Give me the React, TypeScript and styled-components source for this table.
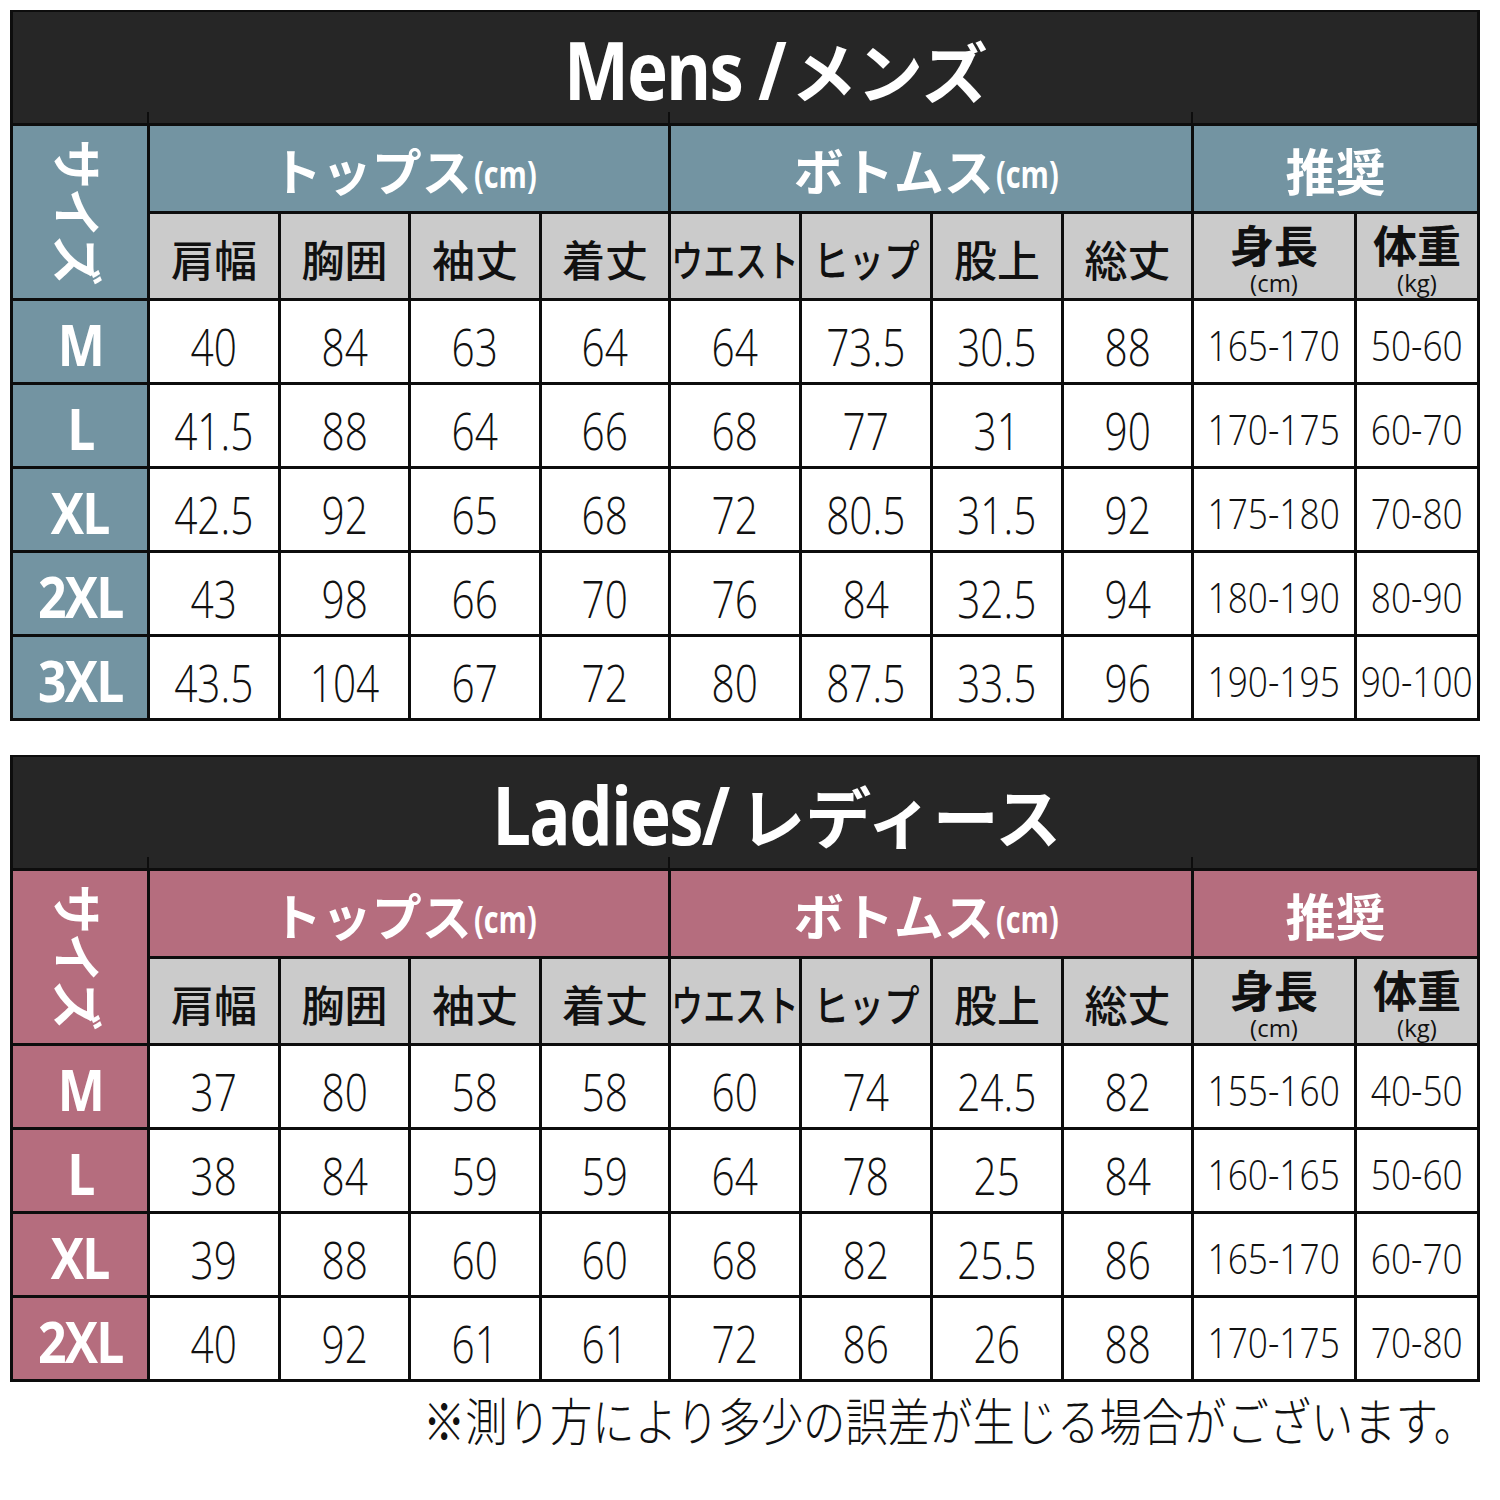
import React from "react";
import styled, { createGlobalStyle } from "styled-components";

const GlobalStyle = createGlobalStyle`
  html, body {
    margin: 0;
    padding: 0;
    background: #ffffff;
  }
  body {
    font-family: "Noto Sans CJK JP", "Open Sans", sans-serif;
    color: #111111;
  }
`;

const LATIN = `"Open Sans", "Noto Sans CJK JP", sans-serif`;
const CJK = `"Noto Sans CJK JP", "Open Sans", sans-serif`;

const Page = styled.div`
  width: 1490px;
  padding: 10px 0 0 10px;
  display: flex;
  flex-direction: column;
`;

const Table = styled.section<{ $rows: number }>`
  width: 1464px;
  display: grid;
  grid-template-columns: 134px 128px 127px 128px 126px 128px 128px 128px 127px 160px 120px;
  grid-template-rows: 111px 85px 84px repeat(${(p) => p.$rows}, 81px);
  gap: 3px;
  background: #0d0d0d;
  border: 3px solid #0d0d0d;
  border-top-width: 2px;
  & + & {
    margin-top: 34px;
  }
`;

const TitleBar = styled.header`
  grid-column: 1 / -1;
  background: #262626;
  color: #ffffff;
  display: flex;
  align-items: center;
  justify-content: center;
  padding-left: 58px;
  padding-top: 2px;
  white-space: nowrap;
`;

const TitleLatin = styled.span`
  display: inline-block;
  font-family: ${LATIN};
  font-weight: 700;
  font-size: 80px;
  letter-spacing: -2px;
  transform: scaleX(0.86);
  margin: 0 -14px;
`;

const TitleKana = styled.span<{ $gap: number }>`
  font-family: ${CJK};
  font-weight: 700;
  font-size: 66px;
  margin-left: ${(p) => p.$gap}px;
`;

const SizeHead = styled.div<{ $bg: string }>`
  grid-row: 2 / span 2;
  grid-column: 1;
  background: ${(p) => p.$bg};
  color: #ffffff;
  display: flex;
  align-items: center;
  justify-content: center;
  writing-mode: vertical-rl;
  text-orientation: sideways;
  font-family: ${CJK};
  font-weight: 700;
  font-size: 50px;
  letter-spacing: -1px;
`;

const GroupHead = styled.div<{ $bg: string; $span: number }>`
  position: relative;
  grid-column: span ${(p) => p.$span};
  background: ${(p) => p.$bg};
  color: #ffffff;
  display: flex;
  align-items: center;
  justify-content: center;
  white-space: nowrap;
  &::before {
    content: "";
    position: absolute;
    left: -3px;
    top: -14px;
    width: 2px;
    height: 12px;
    background: #0d0d0d;
  }
`;

const GroupKana = styled.span`
  font-family: ${CJK};
  font-weight: 700;
  font-size: 50px;
  line-height: 1;
`;

const GroupUnit = styled.span`
  display: inline-block;
  font-family: ${LATIN};
  font-weight: 700;
  font-size: 38px;
  line-height: 1;
  transform: scaleX(0.76);
  margin-left: -8px;
  margin-top: 8px;
`;

const SubHead = styled.div`
  background: #cbcbcb;
  color: #111111;
  display: flex;
  flex-direction: column;
  align-items: center;
  justify-content: center;
  white-space: nowrap;
  overflow: hidden;
`;

const RecHead = styled(SubHead)`
  justify-content: flex-start;
  padding-top: 8px;
  overflow: visible;
`;

const SubLabel = styled.span<{ $x?: number }>`
  display: inline-block;
  font-family: ${CJK};
  font-weight: 500;
  font-size: 43px;
  line-height: 1;
  transform: scaleX(${(p) => p.$x ?? 1});
  padding-top: 4px;
`;

const RecLabel = styled.span`
  font-family: ${CJK};
  font-weight: 700;
  font-size: 44px;
  line-height: 1;
`;

const RecUnit = styled.span`
  display: inline-block;
  font-family: ${LATIN};
  font-weight: 400;
  font-size: 24px;
  line-height: 1;
  margin-top: 5px;
`;

const SizeCell = styled.div<{ $bg: string }>`
  background: ${(p) => p.$bg};
  color: #ffffff;
  display: flex;
  align-items: center;
  justify-content: center;
  white-space: nowrap;
`;

const SizeLabel = styled.span`
  display: inline-block;
  font-family: ${LATIN};
  font-weight: 700;
  font-size: 58px;
  letter-spacing: -2px;
  line-height: 1;
  transform: scaleX(0.86);
  padding-top: 4px;
`;

const ValueCell = styled.div`
  background: #ffffff;
  display: flex;
  align-items: center;
  justify-content: center;
  white-space: nowrap;
  overflow: hidden;
`;

const Value = styled.span<{ $small?: boolean }>`
  display: inline-block;
  font-family: ${LATIN};
  font-weight: 300;
  font-size: ${(p) => (p.$small ? "42px" : "52px")};
  line-height: 1;
  color: #111111;
  transform: scaleX(${(p) => (p.$small ? 0.84 : 0.78)});
  padding-top: ${(p) => (p.$small ? "6px" : "8px")};
`;

const Footer = styled.div`
  margin-top: 12px;
  padding-left: 413px;
  display: flex;
  justify-content: flex-start;
`;

const FooterText = styled.p`
  margin: 0;
  display: inline-block;
  font-family: ${CJK};
  font-weight: 300;
  font-size: 51px;
  line-height: 1;
  color: #111111;
  white-space: nowrap;
  transform: scaleX(0.83);
  transform-origin: left center;
`;

type Row = { size: string; values: string[] };

const subHeads: { label: string; x?: number }[] = [
  { label: "肩幅" },
  { label: "胸囲" },
  { label: "袖丈" },
  { label: "着丈" },
  { label: "ウエスト", x: 0.74 },
  { label: "ヒップ", x: 0.82 },
  { label: "股上" },
  { label: "総丈" },
];

const mens: Row[] = [
  { size: "M", values: ["40", "84", "63", "64", "64", "73.5", "30.5", "88", "165-170", "50-60"] },
  { size: "L", values: ["41.5", "88", "64", "66", "68", "77", "31", "90", "170-175", "60-70"] },
  { size: "XL", values: ["42.5", "92", "65", "68", "72", "80.5", "31.5", "92", "175-180", "70-80"] },
  { size: "2XL", values: ["43", "98", "66", "70", "76", "84", "32.5", "94", "180-190", "80-90"] },
  { size: "3XL", values: ["43.5", "104", "67", "72", "80", "87.5", "33.5", "96", "190-195", "90-100"] },
];

const ladies: Row[] = [
  { size: "M", values: ["37", "80", "58", "58", "60", "74", "24.5", "82", "155-160", "40-50"] },
  { size: "L", values: ["38", "84", "59", "59", "64", "78", "25", "84", "160-165", "50-60"] },
  { size: "XL", values: ["39", "88", "60", "60", "68", "82", "25.5", "86", "165-170", "60-70"] },
  { size: "2XL", values: ["40", "92", "61", "61", "72", "86", "26", "88", "170-175", "70-80"] },
];

function SizeTable({
  latin,
  kana,
  kanaGap,
  accent,
  rows,
}: {
  latin: string;
  kana: string;
  kanaGap: number;
  accent: string;
  rows: Row[];
}) {
  return (
    <Table $rows={rows.length}>
      <TitleBar>
        <TitleLatin>{latin}</TitleLatin>
        <TitleKana $gap={kanaGap}>{kana}</TitleKana>
      </TitleBar>

      <SizeHead $bg={accent}>サイズ</SizeHead>
      <GroupHead $bg={accent} $span={4}>
        <GroupKana>トップス</GroupKana>
        <GroupUnit>(cm)</GroupUnit>
      </GroupHead>
      <GroupHead $bg={accent} $span={4}>
        <GroupKana>ボトムス</GroupKana>
        <GroupUnit>(cm)</GroupUnit>
      </GroupHead>
      <GroupHead $bg={accent} $span={2}>
        <GroupKana>推奨</GroupKana>
      </GroupHead>

      {subHeads.map((h) => (
        <SubHead key={h.label}>
          <SubLabel $x={h.x}>{h.label}</SubLabel>
        </SubHead>
      ))}
      <RecHead>
        <RecLabel>身長</RecLabel>
        <RecUnit>(cm)</RecUnit>
      </RecHead>
      <RecHead>
        <RecLabel>体重</RecLabel>
        <RecUnit>(kg)</RecUnit>
      </RecHead>

      {rows.map((r) => (
        <React.Fragment key={r.size}>
          <SizeCell $bg={accent}>
            <SizeLabel>{r.size}</SizeLabel>
          </SizeCell>
          {r.values.map((v, i) => (
            <ValueCell key={i}>
              <Value $small={i >= 8}>{v}</Value>
            </ValueCell>
          ))}
        </React.Fragment>
      ))}
    </Table>
  );
}

export default function App() {
  return (
    <>
      <GlobalStyle />
      <Page>
        <SizeTable latin="Mens / " kana="メンズ" kanaGap={2} accent="#7394a2" rows={mens} />
        <SizeTable latin="Ladies/ " kana="レディース" kanaGap={6} accent="#b56d7e" rows={ladies} />
        <Footer>
          <FooterText>※測り方により多少の誤差が生じる場合がございます。</FooterText>
        </Footer>
      </Page>
    </>
  );
}
